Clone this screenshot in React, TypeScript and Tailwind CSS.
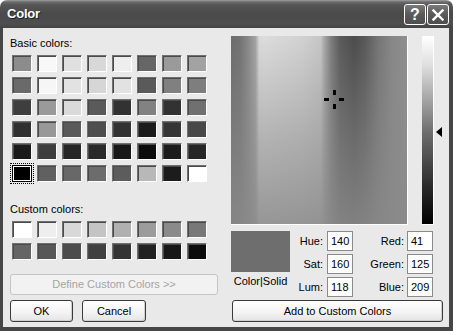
import React from 'react'

// Grayscale XP-style "Color" picker dialog

const basicColors = [
  ['bg-[#8c8c8c]', 'bg-[#f8f8f8]', 'bg-[#e0e0e0]', 'bg-[#d8d8d8]', 'bg-[#eeeeee]', 'bg-[#666666]', 'bg-[#9a9a9a]', 'bg-[#a2a2a2]'],
  ['bg-[#6a6a6a]', 'bg-[#f6f6f6]', 'bg-[#e2e2e2]', 'bg-[#d6d6d6]', 'bg-[#e2e2e2]', 'bg-[#5a5a5a]', 'bg-[#808080]', 'bg-[#7e7e7e]'],
  ['bg-[#3e3e3e]', 'bg-[#9a9a9a]', 'bg-[#dadada]', 'bg-[#5a5a5a]', 'bg-[#323232]', 'bg-[#828282]', 'bg-[#323232]', 'bg-[#707070]'],
  ['bg-[#303030]', 'bg-[#989898]', 'bg-[#5a5a5a]', 'bg-[#4e4e4e]', 'bg-[#323232]', 'bg-[#1c1c1c]', 'bg-[#353535]', 'bg-[#484848]'],
  ['bg-[#1a1a1a]', 'bg-[#3e3e3e]', 'bg-[#262626]', 'bg-[#2a2a2a]', 'bg-[#181818]', 'bg-[#0c0c0c]', 'bg-[#1c1c1c]', 'bg-[#262626]'],
  ['selected', 'bg-[#606060]', 'bg-[#686868]', 'bg-[#6c6c6c]', 'bg-[#5c5c5c]', 'bg-[#b8b8b8]', 'bg-[#1c1c1c]', 'bg-[#ffffff]'],
]

const customColors = [
  ['bg-[#ffffff]', 'bg-[#eeeeee]', 'bg-[#d8d8d8]', 'bg-[#c4c4c4]', 'bg-[#b0b0b0]', 'bg-[#9c9c9c]', 'bg-[#8a8a8a]', 'bg-[#787878]'],
  ['bg-[#646464]', 'bg-[#585858]', 'bg-[#4c4c4c]', 'bg-[#404040]', 'bg-[#343434]', 'bg-[#222222]', 'bg-[#181818]', 'bg-[#0c0c0c]'],
]

const sunken =
  'border border-t-[#707070] border-l-[#707070] border-b-white border-r-white shadow-[inset_1px_1px_0_#4a4a4a]'

function Swatch({ bg }: { bg: string }) {
  if (bg === 'selected') {
    return (
      <div className="w-[20px] h-[17px] outline-1 outline-dotted outline-black outline-offset-1">
        <div className="w-full h-full border border-black p-px bg-white">
          <div className="w-full h-full bg-black" />
        </div>
      </div>
    )
  }
  return <div className={`w-[20px] h-[17px] ${sunken} ${bg}`} />
}

function SwatchGrid({ rows }: { rows: string[][] }) {
  return (
    <div className="grid grid-cols-[repeat(8,20px)] gap-x-[5px] gap-y-[5px] pl-[2px]">
      {rows.flat().map((c, i) => (
        <Swatch key={i} bg={c} />
      ))}
    </div>
  )
}

const btn =
  'rounded-[3px] border border-[#3a3a3a] bg-[linear-gradient(to_bottom,#ffffff,#f4f4f4_55%,#e4e4e4)] shadow-[inset_-1px_-1px_0_#d0d0d0] text-[11px] text-black flex items-center justify-center'

function Field({ label, value, labelW, gap }: { label: string; value: string; labelW: string; gap: string }) {
  return (
    <div className="flex h-[20px] items-center">
      <span className={`${labelW} text-right text-[11px] leading-[20px]`}>{label}</span>
      <div className={`${gap} w-[26px] h-[20px] border border-[#8a8a8a] bg-white pl-[3px] text-[11px] leading-[18px]`}>
        {value}
      </div>
    </div>
  )
}

function TitleButton({ children }: { children: React.ReactNode }) {
  return (
    <div className="w-[22px] h-[21px] rounded-[3px] border border-white bg-[linear-gradient(to_bottom,#7a7a7a,#5a5a5a_50%,#4e4e4e)] flex items-center justify-center text-white">
      {children}
    </div>
  )
}

export default function App() {
  return (
    <div className="w-[453px] h-[331px] flex flex-col bg-white font-['Liberation_Sans',Arial,sans-serif]">
      {/* title bar */}
      <div className="h-[28px] shrink-0 rounded-t-[7px] bg-[linear-gradient(to_bottom,#a0a0a0_0px,#6a6a6a_2px,#555555_5px,#4a4a4a_14px,#4e4e4e_24px,#444444_28px)] flex items-start pl-[7px] pr-[4px]">
        <span className="mt-[6px] text-[13px] leading-[16px] font-bold text-white tracking-[-0.2px] [text-shadow:1px_1px_0_#222]">
          Color
        </span>
        <div className="ml-auto mt-[4px] flex gap-px">
          <TitleButton>
            <span className="text-[16px] leading-none font-bold">?</span>
          </TitleButton>
          <TitleButton>
            <svg width="12" height="12" viewBox="0 0 12 12">
              <path d="M1.5 1.5 L10.5 10.5 M10.5 1.5 L1.5 10.5" stroke="white" strokeWidth="2.4" strokeLinecap="square" />
            </svg>
          </TitleButton>
        </div>
      </div>

      {/* body */}
      <div className="flex-1 flex border-l-[3px] border-r-[4px] border-b-[4px] border-[#464646] bg-[#e9e9e9] pl-[7px] pt-[8px]">
        {/* left column */}
        <div className="w-[208px] flex flex-col">
          <div className="mt-[1px] h-[13px] text-[11px] leading-[13px]">Basic colors:</div>
          <div className="mt-[5px]">
            <SwatchGrid rows={basicColors} />
          </div>
          <div className="mt-[21px] h-[13px] text-[11px] leading-[13px]">Custom colors:</div>
          <div className="mt-[5px]">
            <SwatchGrid rows={customColors} />
          </div>
          <div className="mt-[14px] h-[21px] rounded-[3px] border border-[#c4c4c4] bg-[#f2f2f2] text-[11px] text-[#a4a4a4] flex items-center justify-center">
            Define Custom Colors &gt;&gt;
          </div>
          <div className="mt-[5px] flex gap-[9px]">
            <div className={`${btn} w-[63px] h-[22px]`}>OK</div>
            <div className={`${btn} w-[64px] h-[22px]`}>Cancel</div>
          </div>
        </div>

        {/* right column */}
        <div className="ml-[13px] w-[212px] flex flex-col">
          <div className="flex h-[189px]">
            <div className="w-[178px] h-[189px] border-r border-b border-white">
              <div className="relative w-full h-full bg-[linear-gradient(to_right,#6c6c6c_0%,#727272_5%,#8a8a8a_10%,#a4a4a4_14%,#dadada_16%,#dcdcdc_19%,#d2d2d2_40%,#c6c6c6_51%,#a8a8a8_53%,#7c7c7c_57%,#5a5a5a_62%,#4c4c4c_70%,#585858_76%,#767676_84%,#888888_92%,#8e8e8e_100%)]">
                <div className="absolute inset-0 bg-[linear-gradient(to_bottom,rgba(138,138,138,0)_0%,rgba(138,138,138,0.5)_55%,rgba(138,138,138,0.85)_100%)]" />
                {/* crosshair */}
                <div className="absolute left-[102px] top-[54px] w-[3px] h-[5px] bg-black" />
                <div className="absolute left-[102px] top-[68px] w-[3px] h-[5px] bg-black" />
                <div className="absolute left-[93px] top-[62px] w-[5px] h-[3px] bg-black" />
                <div className="absolute left-[108px] top-[62px] w-[5px] h-[3px] bg-black" />
              </div>
            </div>
            <div className="ml-[14px] w-[12px] h-[189px] border-r border-b border-white">
              <div className="w-full h-full bg-[linear-gradient(to_bottom,#ffffff_0%,#e0e0e0_15%,#6e6e6e_51%,#2a2a2a_80%,#000000_100%)]" />
            </div>
            <div className="relative ml-[2px] w-[7px]">
              <svg className="absolute left-0 top-[91px]" width="7" height="10" viewBox="0 0 7 10">
                <path d="M0 5 L6 0 L6 10 Z" fill="black" />
              </svg>
            </div>
          </div>

          {/* values */}
          <div className="mt-[6px] flex">
            <div className="w-[59px] flex flex-col items-center">
              <div className="w-[59px] h-[41px] bg-[#6e6e6e]" />
              <span className="mt-[3px] text-[11px] leading-[13px] whitespace-nowrap">Color|Solid</span>
            </div>
            <div className="flex flex-col gap-[3px]">
              <Field label="Hue:" value="140" labelW="w-[33px]" gap="ml-[4px]" />
              <Field label="Sat:" value="160" labelW="w-[33px]" gap="ml-[4px]" />
              <Field label="Lum:" value="118" labelW="w-[33px]" gap="ml-[4px]" />
            </div>
            <div className="flex flex-col gap-[3px]">
              <Field label="Red:" value="41" labelW="w-[51px]" gap="ml-[3px]" />
              <Field label="Green:" value="125" labelW="w-[51px]" gap="ml-[3px]" />
              <Field label="Blue:" value="209" labelW="w-[51px]" gap="ml-[3px]" />
            </div>
          </div>

          <div className={`${btn} mt-[3px] ml-[1px] w-[211px] h-[22px]`}>Add to Custom Colors</div>
        </div>
      </div>
    </div>
  )
}
